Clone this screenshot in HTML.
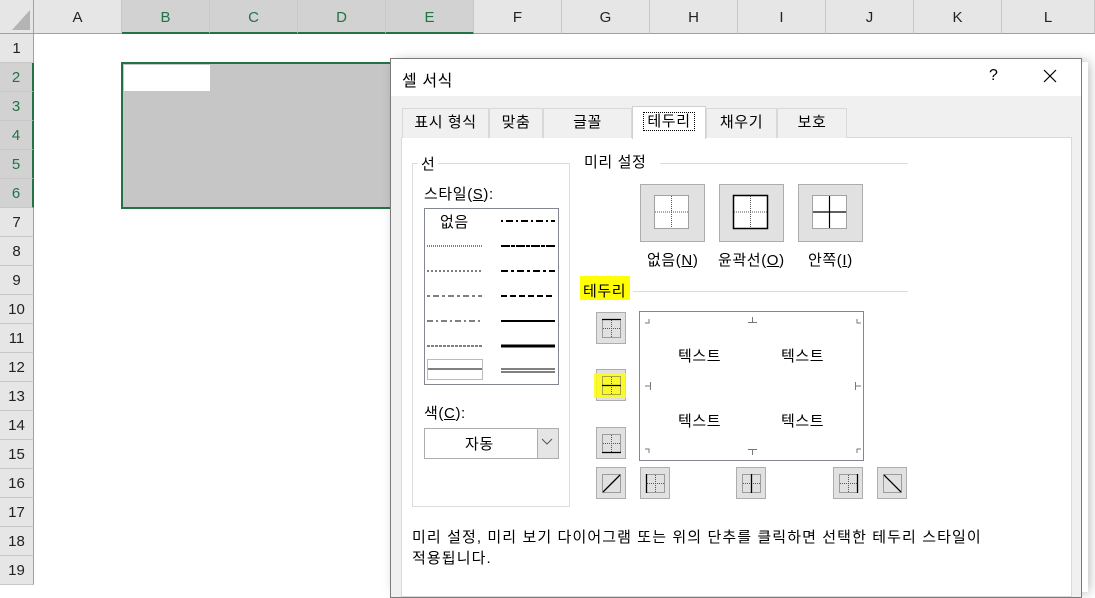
<!DOCTYPE html>
<html><head><meta charset="utf-8"><style>
*{margin:0;padding:0;box-sizing:border-box}
body{width:1095px;height:588px;overflow:hidden;background:#fff;position:relative;font-family:"Liberation Sans","Noto Sans CJK KR",sans-serif;font-size:14px;color:#000}
.a{position:absolute}
.ch{position:absolute;top:0;height:34px;background:#e6e6e6;border-right:1px solid #c8c8c8;border-bottom:1px solid #a0a0a0;text-align:center;line-height:36px;font-size:15px;color:#222}
.ch.s{background:#d2d2d2;color:#217346;border-bottom:2px solid #217346}
.rh{position:absolute;left:0;width:34px;height:29px;background:#e6e6e6;border-bottom:1px solid #c8c8c8;border-right:1px solid #a0a0a0;text-align:center;line-height:29px;font-size:15px;color:#222}
.rh.s{background:#d2d2d2;color:#217346;border-right:2px solid #217346}
.tab{position:absolute;top:108px;height:30px;background:#f0f0f0;border:1px solid #d9d9d9;border-bottom:none;text-align:center;line-height:28px;font-size:15px;letter-spacing:.6px}
.btn{position:absolute;background:#e1e1e1;border:1px solid #adadad}
.t{position:absolute;white-space:nowrap;font-size:15px;letter-spacing:.6px}
</style></head><body>
<div class="a" style="left:0;top:0;width:34px;height:34px;background:#e6e6e6;border-right:1px solid #a0a0a0;border-bottom:1px solid #a0a0a0"></div>
<svg class="a" style="left:10px;top:8px" width="22" height="24"><polygon points="20,2 20,22 2,22" fill="#b4b4b4"/></svg>
<div class="ch" style="left:34px;width:88px">A</div>
<div class="ch s" style="left:122px;width:88px">B</div>
<div class="ch s" style="left:210px;width:88px">C</div>
<div class="ch s" style="left:298px;width:88px">D</div>
<div class="ch s" style="left:386px;width:88px">E</div>
<div class="ch" style="left:474px;width:88px">F</div>
<div class="ch" style="left:562px;width:88px">G</div>
<div class="ch" style="left:650px;width:88px">H</div>
<div class="ch" style="left:738px;width:88px">I</div>
<div class="ch" style="left:826px;width:88px">J</div>
<div class="ch" style="left:914px;width:88px">K</div>
<div class="ch" style="left:1002px;width:93px">L</div>
<div class="rh" style="top:34px">1</div>
<div class="rh s" style="top:63px">2</div>
<div class="rh s" style="top:92px">3</div>
<div class="rh s" style="top:121px">4</div>
<div class="rh s" style="top:150px">5</div>
<div class="rh s" style="top:179px">6</div>
<div class="rh" style="top:208px">7</div>
<div class="rh" style="top:237px">8</div>
<div class="rh" style="top:266px">9</div>
<div class="rh" style="top:295px">10</div>
<div class="rh" style="top:324px">11</div>
<div class="rh" style="top:353px">12</div>
<div class="rh" style="top:382px">13</div>
<div class="rh" style="top:411px">14</div>
<div class="rh" style="top:440px">15</div>
<div class="rh" style="top:469px">16</div>
<div class="rh" style="top:498px">17</div>
<div class="rh" style="top:527px">18</div>
<div class="rh" style="top:556px">19</div>
<div class="a" style="left:121px;top:62px;width:290px;height:147px;border:2px solid #217346;background:#c6c6c6"></div>
<div class="a" style="left:124px;top:65px;width:86px;height:26px;background:#fff"></div>
<div class="a" style="left:396px;top:62px;width:692px;height:530px;box-shadow:0 0 12px rgba(0,0,0,.35)"></div>
<div class="a" style="left:390px;top:58px;width:692px;height:540px;background:#f0f0f0;border:1px solid #7a7a7a"></div>
<div class="a" style="left:391px;top:59px;width:690px;height:37px;background:#fff"></div>
<div class="t" style="left:402px;top:67px;font-size:16px">셀 서식</div>
<div class="t" style="left:989px;top:67px;font-size:16px">?</div>
<svg class="a" style="left:1043px;top:69px" width="14" height="14"><path d="M1 1L13 13M13 1L1 13" stroke="#000" stroke-width="1.2"/></svg>
<div class="a" style="left:401px;top:137px;width:671px;height:460px;background:#fff;border:1px solid #d9d9d9"></div>
<div class="tab" style="left:402px;width:87px">표시 형식</div>
<div class="tab" style="left:489px;width:54px">맞춤</div>
<div class="tab" style="left:543px;width:89px">글꼴</div>
<div class="tab" style="left:632px;top:106px;height:33px;width:74px;background:#fff;border-color:#d0d0d0;line-height:30px"><span style="outline:1px dotted #000;padding:0 3px">테두리</span></div>
<div class="tab" style="left:706px;width:71px">채우기</div>
<div class="tab" style="left:777px;width:70px">보호</div>
<div class="a" style="left:412px;top:163px;width:158px;height:344px;border:1px solid #dcdcdc"></div>
<div class="t" style="left:418px;top:153px;background:#fff;padding:0 3px">선</div>
<div class="t" style="left:424px;top:183px">스타일(<u>S</u>):</div>
<div class="a" style="left:424px;top:208px;width:135px;height:177px;border:1px solid #828790;background:#fff"></div>
<div class="t" style="left:440px;top:211px">없음</div>
<svg class="a" style="left:425px;top:209px" width="133" height="175">
<g stroke="#000" stroke-width="1" fill="none">
<line x1="2" y1="37" x2="57" y2="37" stroke-dasharray="1 1"/>
<line x1="2" y1="62" x2="57" y2="62" stroke-dasharray="2 2"/>
<line x1="2" y1="87" x2="57" y2="87" stroke-dasharray="3 3 6 3"/>
<line x1="2" y1="112" x2="57" y2="112" stroke-dasharray="6 3 2 3"/>
<line x1="2" y1="137" x2="57" y2="137" stroke-dasharray="3 1"/>
<line x1="2" y1="160" x2="57" y2="160"/>
<rect x="2.5" y="150.5" width="55" height="20" stroke="#777" stroke-dasharray="1 1"/>
<line x1="76" y1="12" x2="130" y2="12" stroke-width="2" stroke-dasharray="2 3 7 3"/>
<line x1="76" y1="37" x2="130" y2="37" stroke-width="2" stroke-dasharray="9 1 4 1"/>
<line x1="76" y1="62" x2="130" y2="62" stroke-width="2" stroke-dasharray="7 3 3 3"/>
<line x1="76" y1="87" x2="130" y2="87" stroke-width="2" stroke-dasharray="6 3"/>
<line x1="76" y1="112" x2="130" y2="112" stroke-width="2"/>
<line x1="76" y1="137" x2="130" y2="137" stroke-width="3"/>
<line x1="76" y1="160" x2="130" y2="160"/>
<line x1="76" y1="163" x2="130" y2="163"/>
</g></svg>
<div class="t" style="left:424px;top:402px">색(<u>C</u>):</div>
<div class="a" style="left:424px;top:428px;width:135px;height:31px;border:1px solid #adadad;background:#fff"></div>
<div class="t" style="left:465px;top:433px">자동</div>
<div class="a" style="left:537px;top:429px;width:21px;height:29px;background:#e5e5e5;border-left:1px solid #adadad"></div>
<svg class="a" style="left:541px;top:438px" width="12" height="8"><path d="M1 1L6 6L11 1" stroke="#555" fill="none"/></svg>
<div class="t" style="left:584px;top:151px">미리 설정</div>
<div class="a" style="left:660px;top:163px;width:248px;height:1px;background:#dcdcdc"></div>
<div class="btn" style="left:640px;top:184px;width:65px;height:58px"></div>
<div class="btn" style="left:719px;top:184px;width:65px;height:58px"></div>
<div class="btn" style="left:798px;top:184px;width:65px;height:58px"></div>
<svg class="a" style="left:640px;top:184px" width="230" height="58"><g fill="#fff" stroke="#555" stroke-dasharray="1 1">
<rect x="14.5" y="11.5" width="34" height="33"/><path d="M31.5 12V44M15 28H48" fill="none"/>
<rect x="93.5" y="11.5" width="34" height="33" stroke-dasharray="none" stroke="#000" stroke-width="1.5"/><path d="M110.5 12V44M94 28H127" fill="none"/>
<rect x="172.5" y="11.5" width="34" height="33"/><path d="M189.5 12V44M173 28H206" fill="none" stroke="#000" stroke-dasharray="none" stroke-width="1.2"/>
</g></svg>
<div class="t" style="left:647px;top:249px">없음(<u>N</u>)</div>
<div class="t" style="left:718px;top:249px">윤곽선(<u>O</u>)</div>
<div class="t" style="left:808px;top:249px">안쪽(<u>I</u>)</div>
<div class="a" style="left:580px;top:276px;width:50px;height:24px;background:#ffff00"></div>
<div class="t" style="left:583px;top:280px">테두리</div>
<div class="a" style="left:633px;top:291px;width:275px;height:1px;background:#dcdcdc"></div>
<div class="a" style="left:639px;top:311px;width:225px;height:150px;border:1px solid #828790;background:#fff"></div>
<svg class="a" style="left:639px;top:311px" width="225" height="150"><g stroke="#777" fill="none">
<path d="M10 8V12H6M113.5 6V12M109 11.5H118M218 8V12H222M10 142V138H6M113.5 144V138M109 138.5H118M218 142V138H222M6 75H12M11.5 71V79M222 75H216M216.5 71V79"/></g></svg>
<div class="t" style="left:678px;top:345px">텍스트</div>
<div class="t" style="left:781px;top:345px">텍스트</div>
<div class="t" style="left:678px;top:410px">텍스트</div>
<div class="t" style="left:781px;top:410px">텍스트</div>
<div class="btn" style="left:596px;top:312px;width:30px;height:32px"></div>
<div class="btn" style="left:596px;top:369px;width:30px;height:32px"></div>
<div class="a" style="left:594px;top:373px;width:32px;height:25px;background:#ffff00;opacity:.8"></div>
<div class="btn" style="left:596px;top:427px;width:30px;height:32px"></div>
<div class="btn" style="left:596px;top:467px;width:30px;height:32px"></div>
<div class="btn" style="left:640px;top:467px;width:30px;height:32px"></div>
<div class="btn" style="left:736px;top:467px;width:30px;height:32px"></div>
<div class="btn" style="left:833px;top:467px;width:30px;height:32px"></div>
<div class="btn" style="left:877px;top:467px;width:30px;height:32px"></div>
<svg class="a" style="left:0;top:0" width="1095" height="588"><g fill="none" stroke="#555" stroke-dasharray="1 1">
<rect x="602.5" y="319.5" width="18" height="18"/><path d="M611.5 320V337M603 328.5H620"/>
<rect x="602.5" y="376.5" width="18" height="18"/><path d="M611.5 377V394"/>
<rect x="602.5" y="434.5" width="18" height="18"/><path d="M611.5 435V452M603 443.5H620"/>
<rect x="602.5" y="474.5" width="18" height="18"/>
<rect x="646.5" y="474.5" width="18" height="18"/><path d="M655.5 475V492M647 483.5H664"/>
<rect x="742.5" y="474.5" width="18" height="18"/><path d="M743 483.5H760"/>
<rect x="839.5" y="474.5" width="18" height="18"/><path d="M848.5 475V492M840 483.5H857"/>
<rect x="883.5" y="474.5" width="18" height="18"/>
</g><g stroke="#000" stroke-width="1.3" fill="none">
<path d="M602 319.5H621M602 385.5H621M602 452.5H621M603 492L620 475M646.5 474V493M751.5 474V493M857.5 474V493M884 475L901 492"/>
</g></svg>
<div class="t" style="left:412px;top:526px;letter-spacing:1.1px">미리 설정, 미리 보기 다이어그램 또는 위의 단추를 클릭하면 선택한 테두리 스타일이</div>
<div class="t" style="left:412px;top:547px;letter-spacing:1.1px">적용됩니다.</div>
</body></html>
